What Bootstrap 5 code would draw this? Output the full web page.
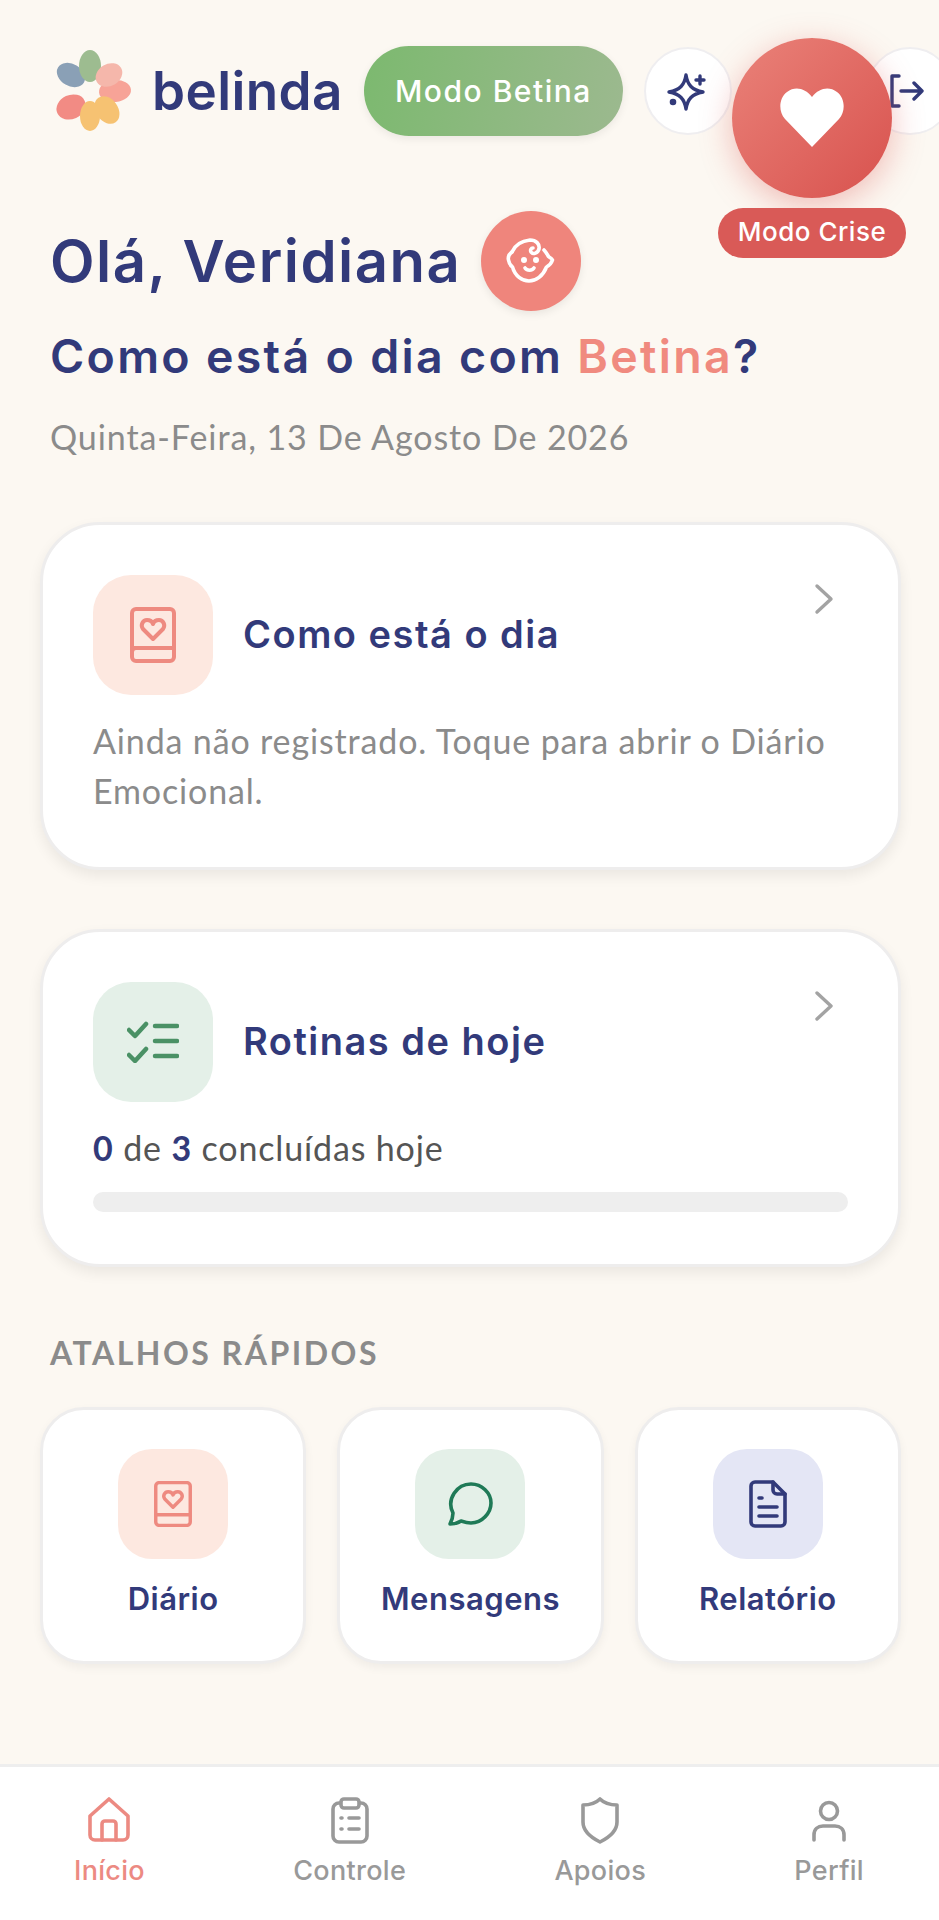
<!DOCTYPE html>
<html lang="pt-BR">

<head>
    <meta charset="UTF-8">
    <meta name="viewport" content="width=device-width, initial-scale=1.0">
    <link rel="stylesheet" href="https://cdn.jsdelivr.net/npm/bootstrap@5.3.3/dist/css/bootstrap.min.css">
    <script src="https://cdn.jsdelivr.net/npm/bootstrap@5.3.3/dist/js/bootstrap.bundle.min.js"></script>
    <title>Belinda</title>
    <style>
        body { background: #fcf8f2; font-family: "Lato", "Noto Sans", sans-serif; overflow: hidden; }
        .app-shell { height: 1920px; width: 939px; overflow: hidden; position: relative; }
        .head-font { font-family: "Inter", "Noto Sans", sans-serif; }
        .top-bar { padding: 46px 0 0 52px; width: 1010px; height: 136px; flex-wrap: nowrap; }
        .brand-name { font-size: 53px; font-weight: 600; color: #323a7a; margin-left: 16px; letter-spacing: .4px; line-height: 90px; }
        .mode-pill { width: 259px; height: 90px; border-radius: 45px; border: 0; color: #fff; font-size: 30px; font-weight: 500; letter-spacing: 1.5px; background: linear-gradient(100deg, #7cb96f, #9cb98f); box-shadow: 0 3px 8px rgba(0,0,0,.07); margin-left: 21px; padding: 0; }
        .round-action { width: 88px; height: 88px; border-radius: 50%; background: #fff; border: 2px solid #efeef0; flex: none; padding: 0; }
        .crisis-wrap { position: absolute; left: 718px; top: 38px; width: 188px; }
        .crisis-btn { width: 160px; height: 160px; border-radius: 50%; border: 0; padding: 0; background: linear-gradient(135deg, #ea8279, #d8524e); box-shadow: 0 8px 32px rgba(222,90,84,.38); }
        .crisis-label { width: 188px; height: 50px; line-height: 48px; margin-top: 10px; border-radius: 25px; background: #d95a57; color: #fff; font-size: 26px; font-weight: 500; letter-spacing: .5px; text-align: center; }
        .greeting { padding: 75px 0 0 50px; }
        .hello { font-size: 58px; font-weight: 600; color: #323a7a; line-height: 100px; margin: 0; letter-spacing: 1.5px; }
        .baby-badge { width: 100px; height: 100px; border-radius: 50%; background: #ef857c; margin-left: 20px; box-shadow: 0 3px 8px rgba(0,0,0,.08); }
        .sub-hello { font-size: 46.5px; font-weight: 600; color: #323a7a; margin: 18px 0 0; line-height: 54px; white-space: nowrap; letter-spacing: 2.3px; }
        .sub-hello span { color: #f08a7f; }
        .date-line { font-size: 34px; color: #8b8b8b; margin: 32px 0 0; line-height: 44px; letter-spacing: .9px; }
        .day-card { margin: 0 38px 0 40px; border: 3px solid #eeeded; border-radius: 60px; box-shadow: 0 6px 14px rgba(0,0,0,.07); background: #fff; }
        .day-card .card-body { padding: 50px 48px 0 50px; }
        .tile-lg { width: 120px; height: 120px; border-radius: 38px; flex: none; }
        .tile-sm { width: 110px; height: 110px; border-radius: 34px; }
        .tone-rose { background: #fde8e0; }
        .tone-green { background: #e4f0e8; }
        .tone-blue { background: #e4e6f5; }
        .card-title-text { font-size: 38px; font-weight: 600; color: #323a7a; margin: 0 0 0 30px; letter-spacing: 1.5px; }
        .side-arrow { margin-top: 8px; margin-right: 16px; }
        .card-note { font-size: 34px; line-height: 50px; color: #8b8b8b; margin: 21px 0 0; letter-spacing: .85px; }
        .count-line { font-size: 34px; line-height: 44px; color: #555; margin: 24px 0 0; letter-spacing: .85px; }
        .count-line b { color: #323a7a; font-weight: 700; }
        .day-bar { height: 20px; border-radius: 10px; background: #eeeeee; margin: 22px 2px 0 0; }
        .section-label { font-size: 32px; font-weight: 700; color: #8b8b8b; letter-spacing: 2.5px; margin: 64px 0 0 50px; line-height: 44px; }
        .quick-row { margin: 32px 22.5px 0 24.5px; --bs-gutter-x: 31px; }
        .quick-card { height: 257px; border: 3px solid #eeeded; border-radius: 44px; background: #fff; box-shadow: 0 4px 10px rgba(0,0,0,.05); padding-top: 39px; }
        .quick-label { font-size: 31px; font-weight: 600; color: #323a7a; margin-top: 18px; line-height: 44px; letter-spacing: .5px; }
        .bottom-tabs { position: absolute; left: 0; right: 0; bottom: 0; height: 156px; background: #fff; border-top: 3px solid #eeeeee; padding: 29px 75px 0 74px; }
        .tab-link { color: #999; font-size: 27px; font-weight: 500; letter-spacing: .3px; text-decoration: none; line-height: 36px; }
        .tab-link.is-on { color: #ec8a82; }
        .tab-link svg { display: block; margin: 0 auto 9px; }
    </style>
</head>

<body>
    <div class="app-shell">
        <div class="top-bar d-flex align-items-center">
            <svg width="84" height="90" viewBox="52 46 84 90" aria-hidden="true">
                <ellipse cx="71" cy="75" rx="15" ry="11" fill="#8aa0b6" transform="rotate(30 71 75)" />
                <ellipse cx="90" cy="66" rx="11" ry="16" fill="#9dbc90" />
                <ellipse cx="115" cy="91" rx="16" ry="11" fill="#f7a397" transform="rotate(-5 115 91)" />
                <ellipse cx="109" cy="75" rx="14" ry="11" fill="#f5b7ab" transform="rotate(-30 109 75)" />
                <ellipse cx="71" cy="107" rx="15" ry="12" fill="#f28b84" transform="rotate(-25 71 107)" />
                <ellipse cx="107" cy="110" rx="11" ry="15" fill="#f6c272" transform="rotate(-35 107 110)" />
                <ellipse cx="90" cy="116" rx="10" ry="15" fill="#f6c272" />
            </svg>
            <span class="brand-name head-font">belinda</span>
            <button class="btn mode-pill head-font" type="button">Modo Betina</button>
            <button class="btn round-action d-flex align-items-center justify-content-center" style="margin-left:21px" type="button" aria-label="Assistente">
                <svg width="44" height="44" viewBox="0 0 44 44" fill="none" stroke="#323a7a" stroke-width="3.400" stroke-linejoin="round" stroke-linecap="round">
                    <path d="M20 6c1.500 10 6 15 17 17-11 2-15.500 7-17 17-1.500-10-6-15-17-17 11-2 15.500-7 17-17z" />
                    <path d="M34 7v8M30 11h8" />
                    <circle cx="7" cy="33" r="1.600" fill="#323a7a" />
                </svg>
            </button>
            <button class="btn round-action" style="margin-left:134px" type="button" aria-label="Sair"></button>
        </div>
        <svg class="position-absolute" style="left:889px;top:74px" width="35" height="34" viewBox="0 0 35 34" fill="none" stroke="#323a7a" stroke-width="3.400" stroke-linecap="round" stroke-linejoin="round">
            <path d="M10 2H3v30h7M12 17h21M25 9l8 8-8 8" />
        </svg>

        <div class="crisis-wrap d-flex flex-column align-items-center">
            <button class="btn crisis-btn d-flex align-items-center justify-content-center" type="button" aria-label="Modo Crise">
                <svg width="64" height="60" viewBox="0 0 64 60"><path fill="#fff" d="M32 59 5 31C-2 23-1 10 7 4c8-6 18-4 25 5 7-9 17-11 25-5 8 6 9 19 2 27z" /></svg>
            </button>
            <div class="crisis-label head-font">Modo Crise</div>
        </div>

        <div class="greeting">
            <div class="d-flex align-items-center">
                <h1 class="hello head-font">Olá, Veridiana</h1>
                <div class="baby-badge d-flex align-items-center justify-content-center">
                    <svg width="50" height="50" viewBox="0 0 50 50" fill="none" stroke="#fff" stroke-width="3.600" stroke-linecap="round" stroke-linejoin="round">
                        <path d="M6 16C2 19 2 22 2.500 24 3 27 5 30 6.500 31 9 40 16 45 23 45s14-5 17.500-14c2-1 5-4 6-7-1-2-4-3-4-3.500C41 18 40 16 38 14" />
                        <path d="M6 16C9 9 15 5 24 4c6 0 10 4 9 9-1 4-6 6-8 3-1-2 0-4 2-4" />
                        <path d="M19 32c2 3 7 3 9 0" />
                        <circle cx="18" cy="24" r="1.200" fill="#fff" />
                        <circle cx="30" cy="24" r="1.200" fill="#fff" />
                    </svg>
                </div>
            </div>
            <h2 class="sub-hello head-font">Como está o dia com <span>Betina</span>?</h2>
            <p class="date-line">Quinta-Feira, 13 De Agosto De 2026</p>
        </div>

        <div class="card day-card" style="margin-top:63px;height:348px">
            <div class="card-body">
                <div class="d-flex align-items-center">
                    <div class="tile-lg tone-rose d-flex align-items-center justify-content-center">
                        <svg width="46" height="56" viewBox="0 0 46 56" fill="none" stroke="#ee8a80" stroke-width="4" stroke-linejoin="round">
                            <rect x="2" y="2" width="42" height="52" rx="4" />
                            <path d="M2 41h42M2 45c0-3 2-4 4-4" />
                            <path d="M23 32 13 22c-3-4 0-9 4-9 3 0 5 1 6 4 1-3 3-4 6-4 4 0 7 5 4 9z" />
                        </svg>
                    </div>
                    <h3 class="card-title-text head-font">Como está o dia</h3>
                    <svg class="ms-auto align-self-start side-arrow" width="20" height="32" viewBox="0 0 20 32" fill="none" stroke="#a3a3a3" stroke-width="3.400" stroke-linecap="round" stroke-linejoin="round"><path d="M3 3l14 13L3 29" /></svg>
                </div>
                <p class="card-note">Ainda não registrado. Toque para abrir o Diário Emocional.</p>
            </div>
        </div>

        <div class="card day-card" style="margin-top:59px;height:338px">
            <div class="card-body">
                <div class="d-flex align-items-center">
                    <div class="tile-lg tone-green d-flex align-items-center justify-content-center">
                        <svg width="52" height="42" viewBox="0 0 52 42" fill="none" stroke="#4a9165" stroke-width="4.500" stroke-linecap="round" stroke-linejoin="round">
                            <path d="M2 9l6 6L19 3M2 34l6 6 11-12M28 5h22M28 20h22M28 35h22" />
                        </svg>
                    </div>
                    <h3 class="card-title-text head-font">Rotinas de hoje</h3>
                    <svg class="ms-auto align-self-start side-arrow" width="20" height="32" viewBox="0 0 20 32" fill="none" stroke="#a3a3a3" stroke-width="3.400" stroke-linecap="round" stroke-linejoin="round"><path d="M3 3l14 13L3 29" /></svg>
                </div>
                <p class="count-line"><b>0</b> de <b>3</b> concluídas hoje</p>
                <div class="day-bar"></div>
            </div>
        </div>

        <div class="section-label">ATALHOS RÁPIDOS</div>

        <div class="row row-cols-3 quick-row">
            <div class="col">
                <div class="quick-card d-flex flex-column align-items-center">
                    <div class="tile-sm tone-rose d-flex align-items-center justify-content-center">
                        <svg width="38" height="46" viewBox="0 0 46 56" fill="none" stroke="#ee8a80" stroke-width="4.200" stroke-linejoin="round">
                            <rect x="2" y="2" width="42" height="52" rx="4" />
                            <path d="M2 41h42" />
                            <path d="M23 32 13 22c-3-4 0-9 4-9 3 0 5 1 6 4 1-3 3-4 6-4 4 0 7 5 4 9z" />
                        </svg>
                    </div>
                    <div class="quick-label head-font">Diário</div>
                </div>
            </div>
            <div class="col">
                <div class="quick-card d-flex flex-column align-items-center">
                    <div class="tile-sm tone-green d-flex align-items-center justify-content-center">
                        <svg width="46" height="46" viewBox="0 0 46 46" fill="none" stroke="#1f7a57" stroke-width="3.600" stroke-linejoin="round">
                            <path d="M3 43c2-4 3-7 3-11C-1 18 10 3 24 3c11 0 20 9 20 19s-9 20-20 20c-4 0-7-1-10-2-3 2-7 3-11 3z" />
                        </svg>
                    </div>
                    <div class="quick-label head-font">Mensagens</div>
                </div>
            </div>
            <div class="col">
                <div class="quick-card d-flex flex-column align-items-center">
                    <div class="tile-sm tone-blue d-flex align-items-center justify-content-center">
                        <svg width="38" height="48" viewBox="0 0 38 48" fill="none" stroke="#323a7a" stroke-width="3.600" stroke-linejoin="round" stroke-linecap="round">
                            <path d="M6 2h18l12 12v28a4 4 0 0 1-4 4H6a4 4 0 0 1-4-4V6a4 4 0 0 1 4-4z" />
                            <path d="M24 2v8a4 4 0 0 0 4 4h8M10 18h3M10 27h18M10 36h18" />
                        </svg>
                    </div>
                    <div class="quick-label head-font">Relatório</div>
                </div>
            </div>
        </div>

        <nav class="bottom-tabs d-flex justify-content-between align-items-start head-font">
            <a class="tab-link is-on text-center" href="#">
                <svg width="44" height="48" viewBox="0 0 44 48" fill="none" stroke="#ec8a82" stroke-width="3.600" stroke-linejoin="round" stroke-linecap="round">
                    <path d="M22 3 3 20v19a5 5 0 0 0 5 5h28a5 5 0 0 0 5-5V20z" />
                    <path d="M15 44V28a3 3 0 0 1 3-3h8a3 3 0 0 1 3 3v16" />
                </svg>
                Início
            </a>
            <a class="tab-link text-center" href="#">
                <svg width="40" height="48" viewBox="0 0 40 48" fill="none" stroke="#999" stroke-width="3.600" stroke-linejoin="round" stroke-linecap="round">
                    <rect x="3" y="7" width="34" height="39" rx="6" />
                    <rect x="11" y="3" width="18" height="9" rx="3" fill="#fff" />
                    <path d="M11 22h1M19 22h10M11 33h1M19 33h10" />
                </svg>
                Controle
            </a>
            <a class="tab-link text-center" href="#">
                <svg width="40" height="48" viewBox="0 0 40 48" fill="none" stroke="#999" stroke-width="3.600" stroke-linejoin="round">
                    <path d="M20 3c4 4 10 6 17 6v17c0 9-7 15-17 20C10 41 3 35 3 26V9c7 0 13-2 17-6z" />
                </svg>
                Apoios
            </a>
            <a class="tab-link text-center" href="#">
                <svg width="36" height="48" viewBox="0 0 36 48" fill="none" stroke="#999" stroke-width="3.600" stroke-linecap="round">
                    <circle cx="18" cy="15" r="8.500" />
                    <path d="M3 44v-5c0-6 4-9 9-9h12c5 0 9 3 9 9v5" />
                </svg>
                Perfil
            </a>
        </nav>
    </div>
</body>

</html>
